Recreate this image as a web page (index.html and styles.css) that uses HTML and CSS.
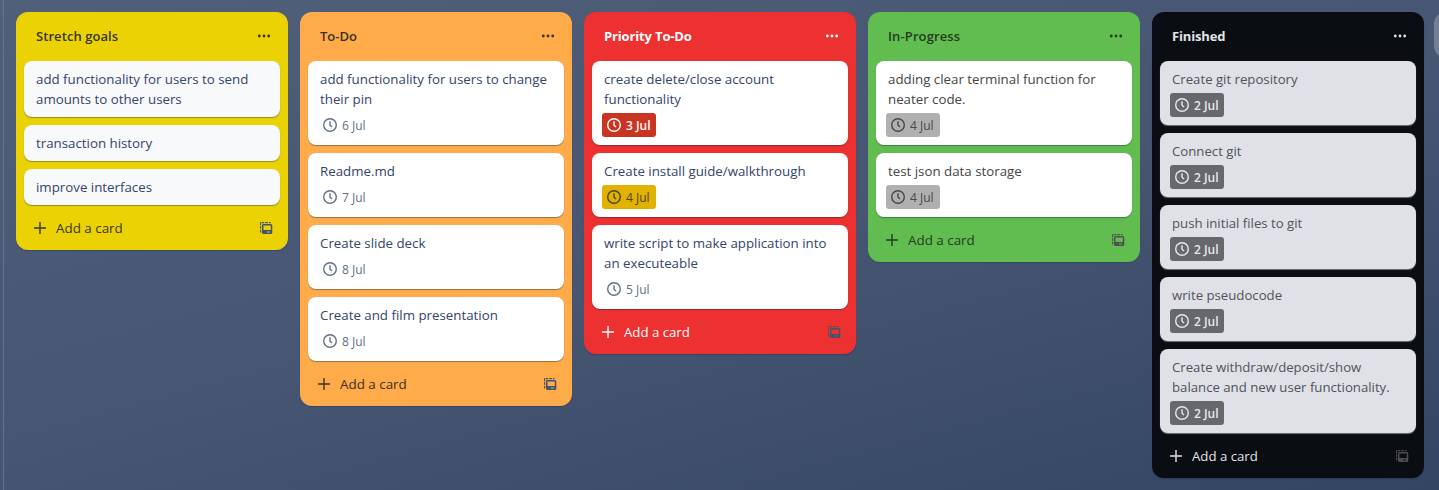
FILE: index.html
```
<!DOCTYPE html>
<html lang="en">
<head>
<meta charset="utf-8">
<title>Board</title>
<link rel="stylesheet" href="styles.css">
</head>
<body>
<svg class="defs" aria-hidden="true">
  <symbol id="dots" viewBox="0 0 16 16"><circle cx="3.3" cy="8" r="1.4"/><circle cx="8" cy="8" r="1.4"/><circle cx="12.7" cy="8" r="1.4"/></symbol>
  <symbol id="plus" viewBox="0 0 16 16"><path d="M8 2v12M2 8h12" fill="none" stroke="currentColor" stroke-width="1.4"/></symbol>
  <symbol id="clock" viewBox="0 0 16 16"><circle cx="8" cy="8" r="6.3" fill="none" stroke="currentColor" stroke-width="1.4"/><path d="M8 4.2v4l2 1.9" fill="none" stroke="currentColor" stroke-width="1.4"/></symbol>
  <symbol id="template" viewBox="0 0 16 16"><path d="M2.6 12.4V2.7H12.6" fill="none" stroke="currentColor" stroke-width="1.2" stroke-dasharray="2.6 1"/><path fill-rule="evenodd" d="M5.5 4h7.3q1.5 0 1.5 1.5v7q0 1.500-1.500 1.500H5.500Q4 14 4 12.500v-7Q4 4 5.500 4zM5.500 5.500v4.600h7.300V5.500zM9 11.500v1h2.800v-1z"/></symbol>
</svg>
<main class="board">
  <section class="list yellow">
    <header class="head"><h2>Stretch goals</h2><svg class="icon"><use href="#dots"/></svg></header>
    <div class="cards">
      <article class="card"><p>add functionality for users to send<br>amounts to other users</p></article>
      <article class="card"><p>transaction history</p></article>
      <article class="card"><p>improve interfaces</p></article>
    </div>
    <footer class="foot"><svg class="icon"><use href="#plus"/></svg><span>Add a card</span><svg class="icon tpl"><use href="#template"/></svg></footer>
  </section>
  <section class="list orange">
    <header class="head"><h2>To-Do</h2><svg class="icon"><use href="#dots"/></svg></header>
    <div class="cards">
      <article class="card"><p>add functionality for users to change<br>their pin</p><span class="due"><svg class="icon"><use href="#clock"/></svg><span>6 Jul</span></span></article>
      <article class="card"><p>Readme.md</p><span class="due"><svg class="icon"><use href="#clock"/></svg><span>7 Jul</span></span></article>
      <article class="card"><p>Create slide deck</p><span class="due"><svg class="icon"><use href="#clock"/></svg><span>8 Jul</span></span></article>
      <article class="card"><p>Create and film presentation</p><span class="due"><svg class="icon"><use href="#clock"/></svg><span>8 Jul</span></span></article>
    </div>
    <footer class="foot"><svg class="icon"><use href="#plus"/></svg><span>Add a card</span><svg class="icon tpl"><use href="#template"/></svg></footer>
  </section>
  <section class="list red">
    <header class="head"><h2>Priority To-Do</h2><svg class="icon"><use href="#dots"/></svg></header>
    <div class="cards">
      <article class="card"><p>create delete/close account<br>functionality</p><span class="due late"><svg class="icon"><use href="#clock"/></svg><span>3 Jul</span></span></article>
      <article class="card"><p>Create install guide/walkthrough</p><span class="due soon"><svg class="icon"><use href="#clock"/></svg><span>4 Jul</span></span></article>
      <article class="card"><p>write script to make application into<br>an executeable</p><span class="due"><svg class="icon"><use href="#clock"/></svg><span>5 Jul</span></span></article>
    </div>
    <footer class="foot"><svg class="icon"><use href="#plus"/></svg><span>Add a card</span><svg class="icon tpl"><use href="#template"/></svg></footer>
  </section>
  <section class="list green">
    <header class="head"><h2>In-Progress</h2><svg class="icon"><use href="#dots"/></svg></header>
    <div class="cards">
      <article class="card"><p>adding clear terminal function for<br>neater code.</p><span class="due"><svg class="icon"><use href="#clock"/></svg><span>4 Jul</span></span></article>
      <article class="card"><p>test json data storage</p><span class="due"><svg class="icon"><use href="#clock"/></svg><span>4 Jul</span></span></article>
    </div>
    <footer class="foot"><svg class="icon"><use href="#plus"/></svg><span>Add a card</span><svg class="icon tpl"><use href="#template"/></svg></footer>
  </section>
  <section class="list black">
    <header class="head"><h2>Finished</h2><svg class="icon"><use href="#dots"/></svg></header>
    <div class="cards">
      <article class="card"><p>Create git repository</p><span class="due"><svg class="icon"><use href="#clock"/></svg><span>2 Jul</span></span></article>
      <article class="card"><p>Connect git</p><span class="due"><svg class="icon"><use href="#clock"/></svg><span>2 Jul</span></span></article>
      <article class="card"><p>push initial files to git</p><span class="due"><svg class="icon"><use href="#clock"/></svg><span>2 Jul</span></span></article>
      <article class="card"><p>write pseudocode</p><span class="due"><svg class="icon"><use href="#clock"/></svg><span>2 Jul</span></span></article>
      <article class="card"><p>Create withdraw/deposit/show<br>balance and new user functionality.</p><span class="due"><svg class="icon"><use href="#clock"/></svg><span>2 Jul</span></span></article>
    </div>
    <footer class="foot"><svg class="icon"><use href="#plus"/></svg><span>Add a card</span><svg class="icon tpl"><use href="#template"/></svg></footer>
  </section>
  <div class="add-list"></div>
</main>
</body>
</html>
```
FILE: styles.css
```
* { box-sizing: border-box; }
html { background: linear-gradient(165deg, #50607a 0%, #465673 50%, #344563 100%); min-height: 100%; }
body { margin: 0; overflow: hidden; font-family: "Open Sans", "Noto Sans", sans-serif; }
h2, p { margin: 0; }
.defs { display: none; }
.icon { width: 16px; height: 16px; flex: none; display: block; fill: currentColor; }

.board {
  display: flex;
  align-items: flex-start;
  gap: 12px;
  width: 1436px;
  height: 490px;
  padding: 12px 0 0 12px;
  margin-left: 3px;
  border-left: 1px solid #64748f;
  overflow: hidden;
}

.list {
  flex: none;
  width: 272px;
  padding: 0 8px;
  border-radius: 12px;
  box-shadow: 0 1px 1px rgba(9, 30, 66, .25);
}
.head {
  display: flex;
  align-items: center;
  justify-content: space-between;
  height: 49px;
  padding: 0 8px 1px 12px;
}
.head h2 { font-size: 13px; line-height: 20px; font-weight: 600; white-space: nowrap; }
.cards { display: flex; flex-direction: column; gap: 8px; }
.card {
  padding: 8px 12px;
  border-radius: 8px;
  background: #fff;
  color: #34456a;
  font-size: 13.3px;
  line-height: 20px;
  white-space: nowrap;
  box-shadow: 0 1px 1px rgba(9, 30, 66, .4);
}
.due {
  display: flex;
  align-items: center;
  gap: 4px;
  width: 54px;
  height: 24px;
  margin: 4px 0 0 -2px;
  padding-left: 4px;
  border-radius: 3px;
  color: #626f86;
  font-size: 12px;
}
.due span { padding-top: 2px; }
.foot { display: flex; align-items: center; height: 45px; padding: 0 6px 0 8px; font-size: 13.4px; }
.foot span { flex: 1; margin-left: 8px; }
.tpl { color: #44546f; }

.yellow { background: #ebd205; color: #38361c; }
.yellow .card { background: #f8f9fb; }
.yellow h2 { letter-spacing: .07px; }
.orange { background: #ffab4a; color: #3a3027; }
.red { background: #ed3030; color: #fff; }
.red h2, .black h2 { font-weight: 700; letter-spacing: -.15px; }
.red .foot, .black .foot { font-weight: 500; font-size: 13.2px; }
.green { background: #61bd4f; color: #243b20; }
.green h2 { letter-spacing: .12px; }
.green .card { color: #454545; }
.green .due { background: #b0b0b0; color: #484848; }
.green .tpl { color: #505050; }
.black { background: #0a0d12; color: #e2e4e8; }
.black .card { background: #dfe1e6; color: #50535a; font-size: 13.2px; box-shadow: 0 1px 1px #70737a; }
.black .due { background: #66686d; color: #e6e7ea; font-size: 12px; font-weight: 600; }
.black .tpl { color: #4b4d51; }
.red .late { background: #ca3521; color: #fff; font-weight: 600; }
.red .soon { background: #e2b203; color: #4a4421; }
.add-list { flex: none; width: 272px; height: 46px; border-radius: 12px; background: rgba(255, 255, 255, .24); margin-left: -2px; }
```
